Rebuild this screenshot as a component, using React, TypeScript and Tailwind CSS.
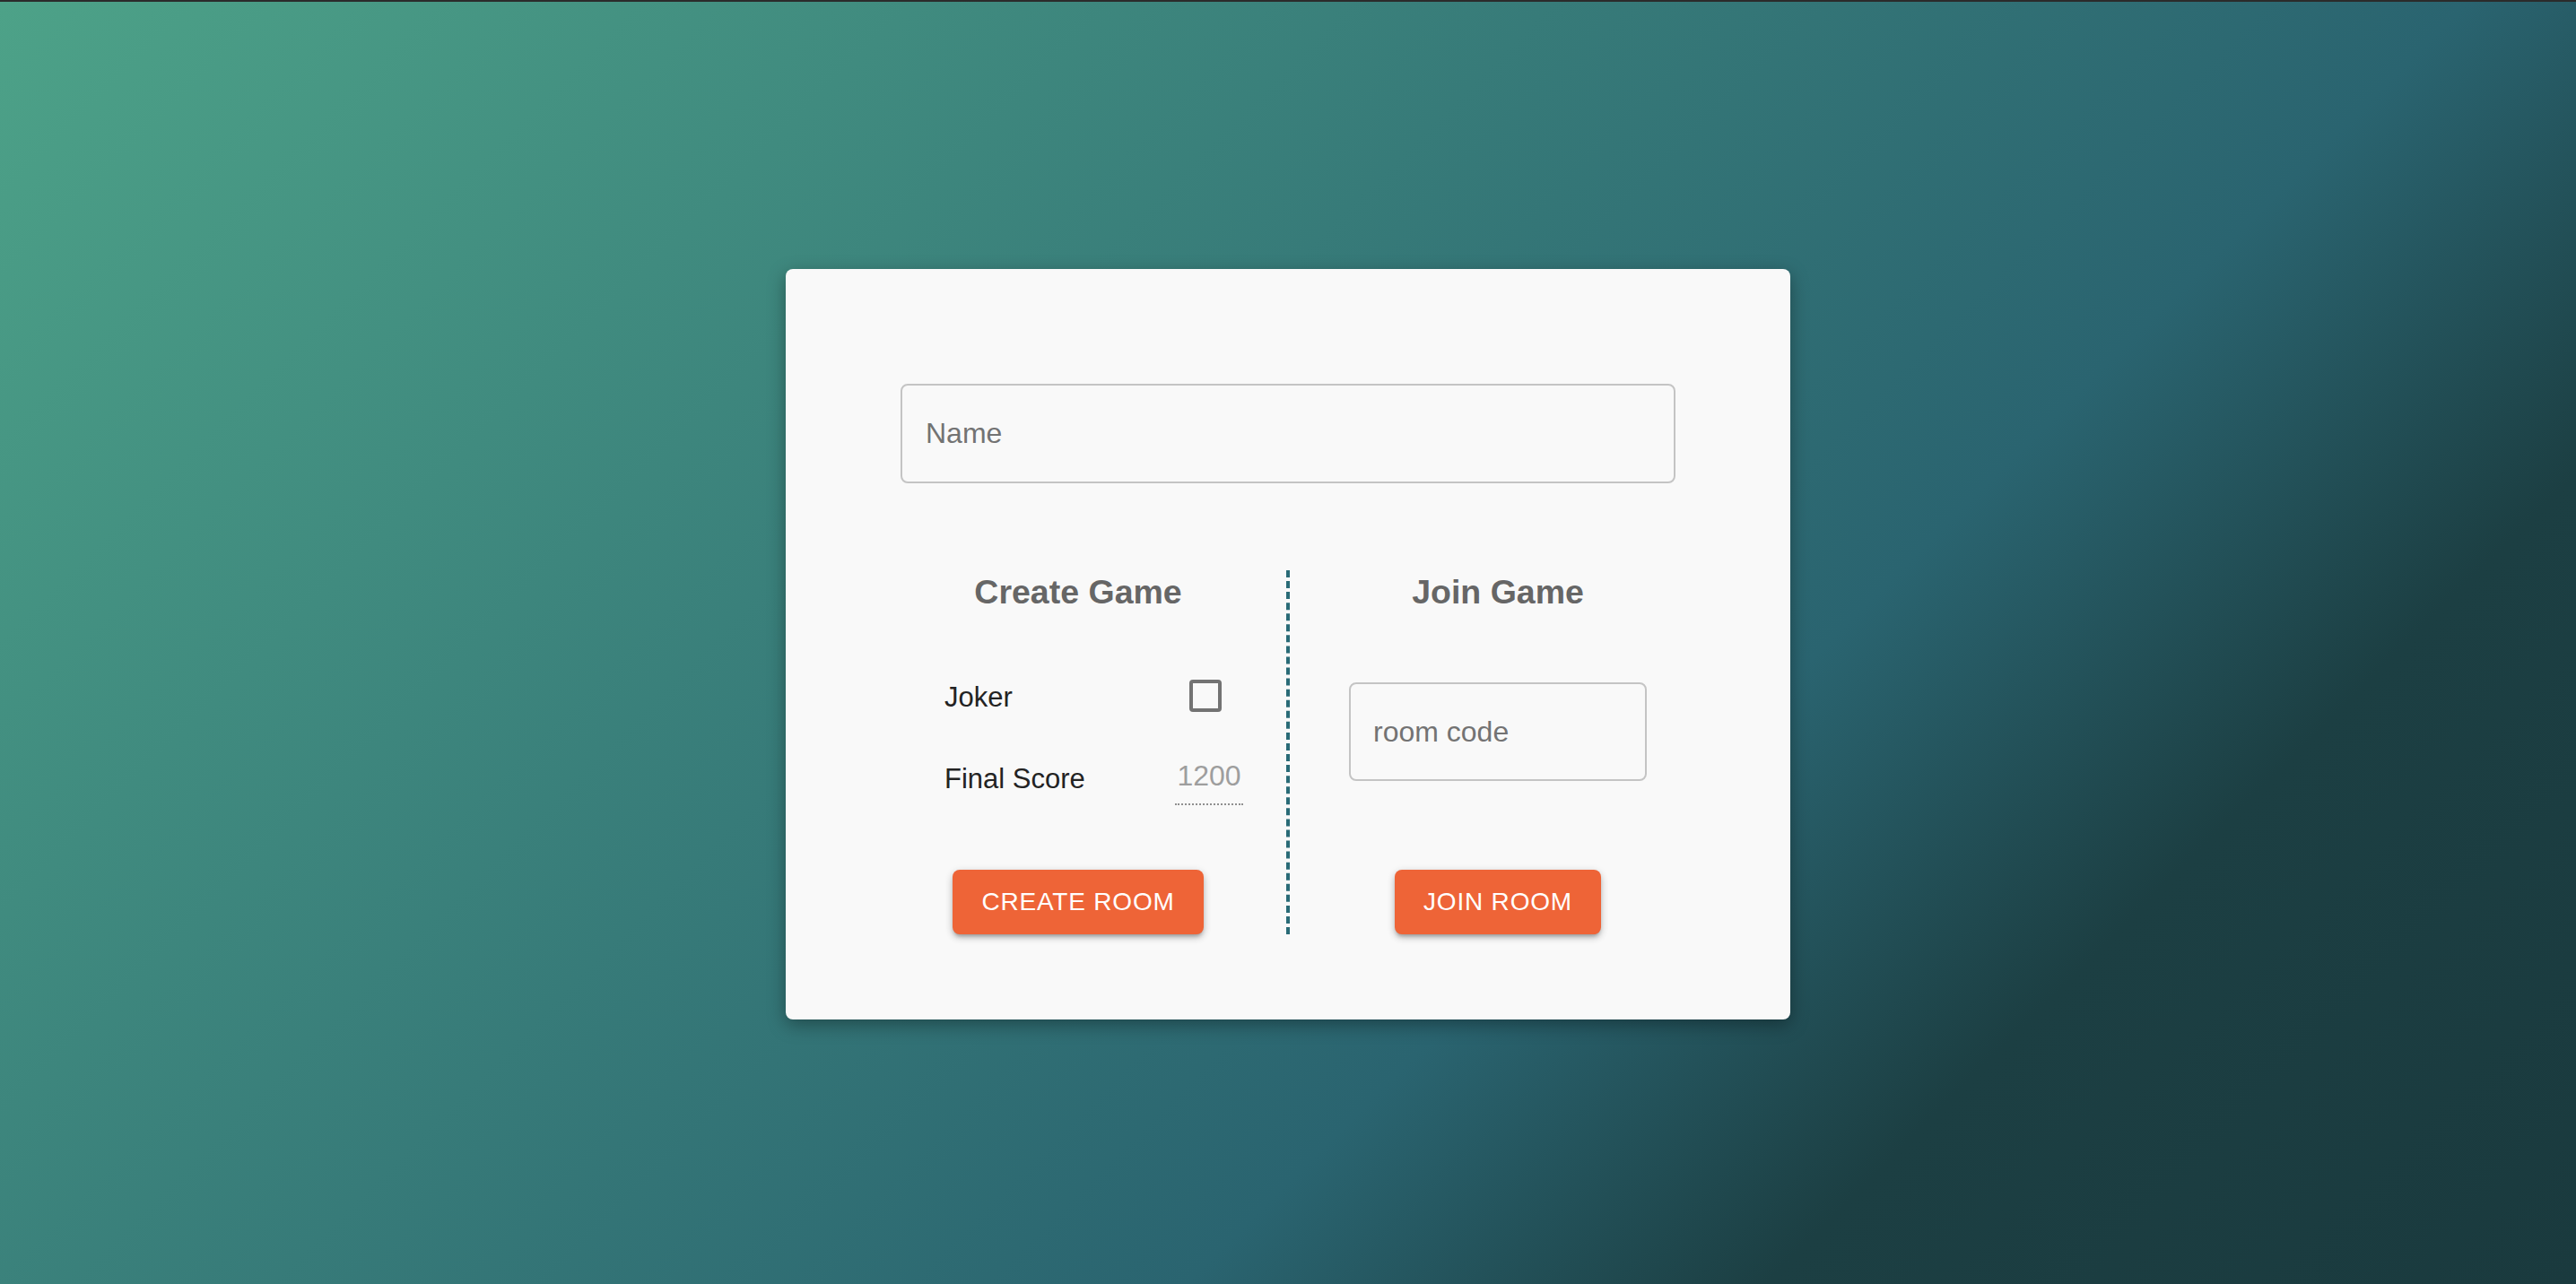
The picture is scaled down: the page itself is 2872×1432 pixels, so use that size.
import React from "react";

export default function App() {
  return (
    <div className="w-full h-[1432px] flex flex-col font-['Liberation_Sans',Arial,sans-serif]">
      <div className="h-[2px] bg-[#2b2b2b] shrink-0" />
      <div className="flex-1 flex items-center justify-center pt-[2px] bg-[linear-gradient(135deg,#4da288_0%,#2a6470_64%,#1c3f43_79%,#1a3a3e_100%)]">
        <div className="w-[1120px] h-[837px] bg-[#f9f9f9] rounded-[8px] shadow-[0_6px_20px_rgba(0,0,0,0.35)] px-[128px] pt-[128px] pb-[95px] flex flex-col">
          <div className="h-[111px] border-2 border-[#c4c4c4] rounded-[8px] flex items-center px-[26px] text-[32px] text-[#737373]">
            Name
          </div>
          <div className="-mx-[34px] mt-[97px] flex flex-1">
            {/* Left column */}
            <div className="w-[464px] flex flex-col items-center">
              <h3 className="h-[48px] leading-[48px] text-[37.5px] font-bold text-[#666666]">Create Game</h3>
              <div className="self-start ml-[83px] w-[333px] mt-[50px]">
                <div className="h-[84px] flex items-center justify-between">
                  <span className="text-[31px] text-[#232323] pt-[6px]">Joker</span>
                  <div className="w-[84px] h-[84px] flex items-center justify-center">
                    <div className="w-[36px] h-[36px] border-[4px] border-[#737373] rounded-[4px]" />
                  </div>
                </div>
                <div className="mt-[22px] flex items-center justify-between">
                  <span className="text-[31px] leading-[44px] text-[#232323]">Final Score</span>
                  <div className="w-[76px] border-b-2 border-dotted border-[#8f8f8f] pb-[8px] pt-[2px] text-center text-[32px] leading-[46px] text-[#9e9e9e]">
                    1200
                  </div>
                </div>
              </div>
              <button className="mt-auto h-[72px] px-[32px] rounded-[8px] bg-[#ee6437] text-white text-[28px] tracking-[0.8px] shadow-[0_4px_4px_-2px_rgba(0,0,0,0.25),0_4px_8px_0_rgba(0,0,0,0.14),0_2px_10px_0_rgba(0,0,0,0.12)]">
                CREATE ROOM
              </button>
            </div>
            {/* Divider */}
            <div className="w-[4px] border-l-4 border-dashed border-[#2a6b77]" />
            {/* Right column */}
            <div className="w-[464px] flex flex-col items-center">
              <h3 className="h-[48px] leading-[48px] text-[37.5px] font-bold text-[#666666]">Join Game</h3>
              <div className="mt-[77px] w-[332px] h-[110px] border-2 border-[#c4c4c4] rounded-[8px] flex items-center px-[25px] text-[32px] text-[#737373]">
                room code
              </div>
              <button className="mt-auto h-[72px] px-[32px] rounded-[8px] bg-[#ee6437] text-white text-[28px] tracking-[0.8px] shadow-[0_4px_4px_-2px_rgba(0,0,0,0.25),0_4px_8px_0_rgba(0,0,0,0.14),0_2px_10px_0_rgba(0,0,0,0.12)]">
                JOIN ROOM
              </button>
            </div>
          </div>
        </div>
      </div>
    </div>
  );
}
